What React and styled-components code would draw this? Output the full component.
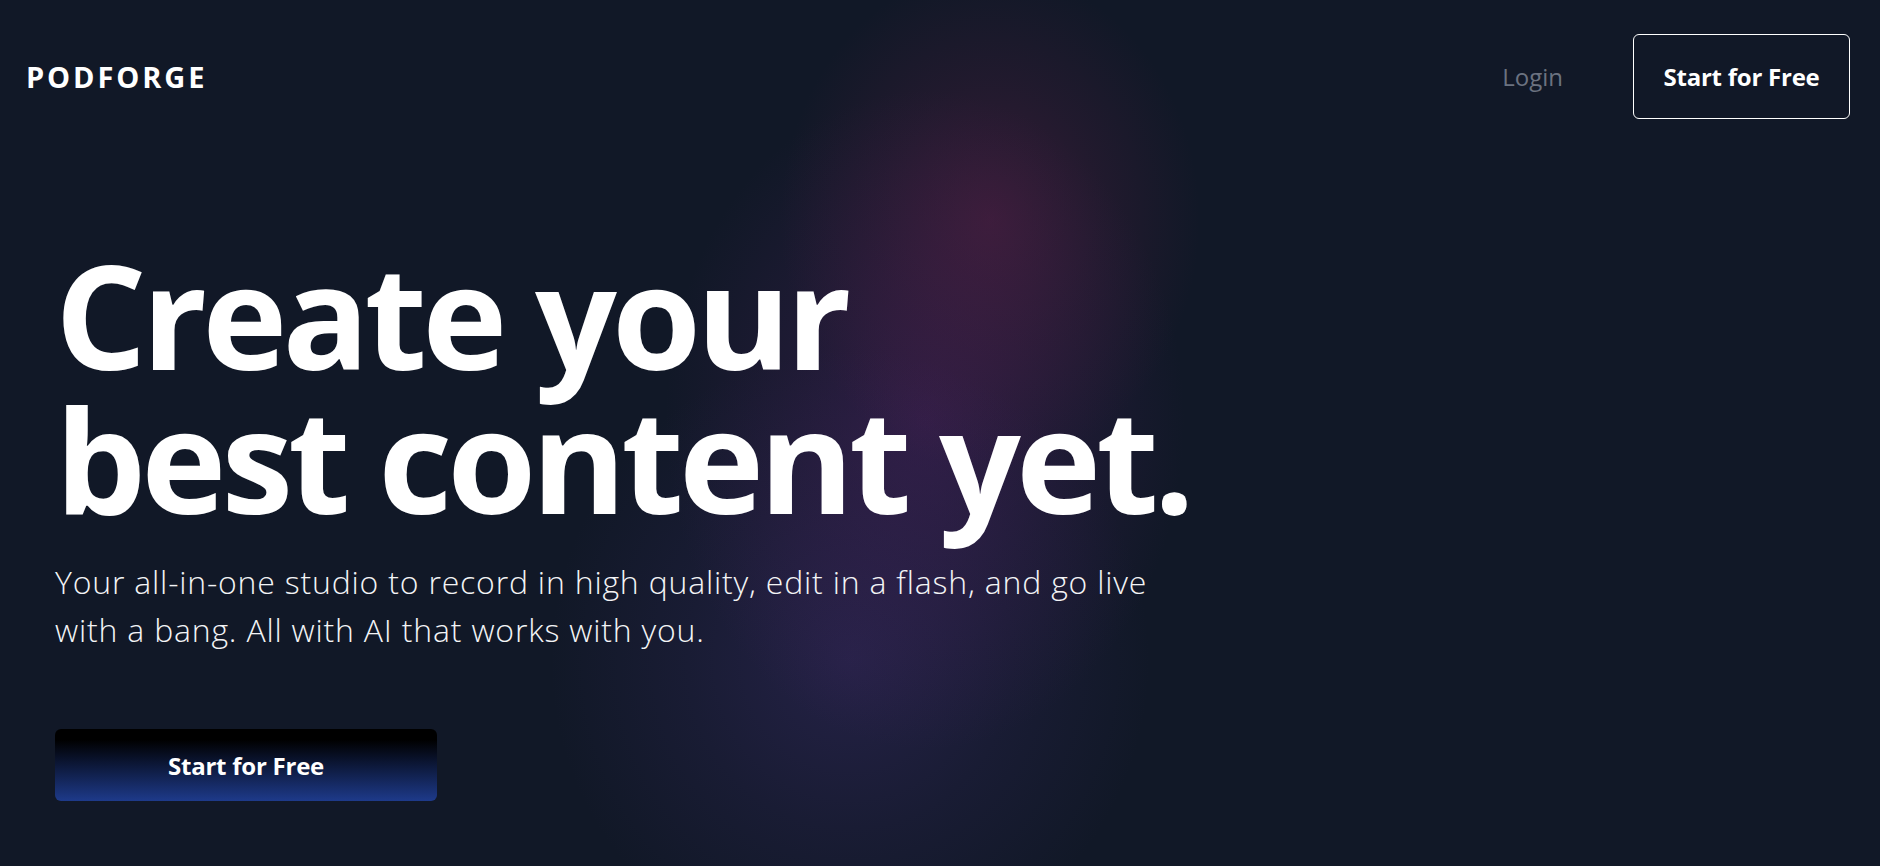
import React from 'react'
import styled, { createGlobalStyle } from 'styled-components'

const GlobalStyle = createGlobalStyle`
    * {
        box-sizing: border-box;
    }
    body {
        margin: 0;
        background: #111827;
        font-family: "Open Sans", "Noto Sans", sans-serif;
        color: #fff;
    }
`

const App = () => {
    return (
        <>
            <GlobalStyle />
            <Page>
                <Header>
                    <Logo>PODFORGE</Logo>
                    <Nav>
                        <LoginLink href="#">Login</LoginLink>
                        <OutlineButton>Start for Free</OutlineButton>
                    </Nav>
                </Header>
                <Hero>
                    <Headline>
                        Create your
                        <br />
                        best content yet.
                    </Headline>
                    <Lead>
                        Your all-in-one studio to record in high quality, edit in a flash, and go live
                        with a bang. All with AI that works with you.
                    </Lead>
                    <CtaButton>Start for Free</CtaButton>
                </Hero>
            </Page>
        </>
    )
}

export default App

const Page = styled.div`
    min-height: 100vh;
    background:
        radial-gradient(ellipse 210px 250px at 990px 220px, rgba(112, 34, 78, 0.4) 0%, rgba(112, 34, 78, 0.17) 55%, rgba(112, 34, 78, 0) 100%),
        radial-gradient(ellipse 260px 330px at 925px 420px, rgba(88, 36, 108, 0.42) 0%, rgba(88, 36, 108, 0.18) 55%, rgba(88, 36, 108, 0) 100%),
        radial-gradient(ellipse 300px 310px at 850px 660px, rgba(66, 48, 118, 0.4) 0%, rgba(66, 48, 118, 0.16) 55%, rgba(66, 48, 118, 0) 100%),
        #111827;
`

const Header = styled.header`
    display: flex;
    justify-content: space-between;
    align-items: center;
    padding: 34px 30px 0 26px;
`

const Logo = styled.div`
    font-size: 29px;
    font-weight: 700;
    letter-spacing: 0.1em;
`

const Nav = styled.nav`
    display: flex;
    align-items: center;
    gap: 70px;
`

const LoginLink = styled.a`
    color: #6b7280;
    font-size: 24px;
    font-weight: 500;
    text-decoration: none;
`

const OutlineButton = styled.button`
    height: 85px;
    width: 217px;
    border: 1px solid #fff;
    border-radius: 6px;
    background: transparent;
    color: #fff;
    font: 700 24px "Open Sans", "Noto Sans", sans-serif;
    letter-spacing: -0.01em;
`

const Hero = styled.main`
    display: flex;
    flex-direction: column;
    align-items: flex-start;
    padding: 123px 0 0 55px;
`

const Headline = styled.h1`
    margin: 0;
    font-size: 144px;
    font-weight: 700;
    line-height: 1;
    letter-spacing: -0.034em;
`

const Lead = styled.p`
    margin: 28px 0 0;
    max-width: 1105px;
    font-size: 32px;
    font-weight: 300;
    line-height: 48px;
    letter-spacing: 0.8px;
    color: #f3f4f6;
`

const CtaButton = styled.button`
    margin-top: 75px;
    width: 382px;
    height: 72px;
    border: none;
    border-radius: 6px;
    background: linear-gradient(180deg, #000 15%, #1e3a8a 100%);
    color: #fff;
    font: 700 24px "Open Sans", "Noto Sans", sans-serif;
    letter-spacing: -0.01em;
`
